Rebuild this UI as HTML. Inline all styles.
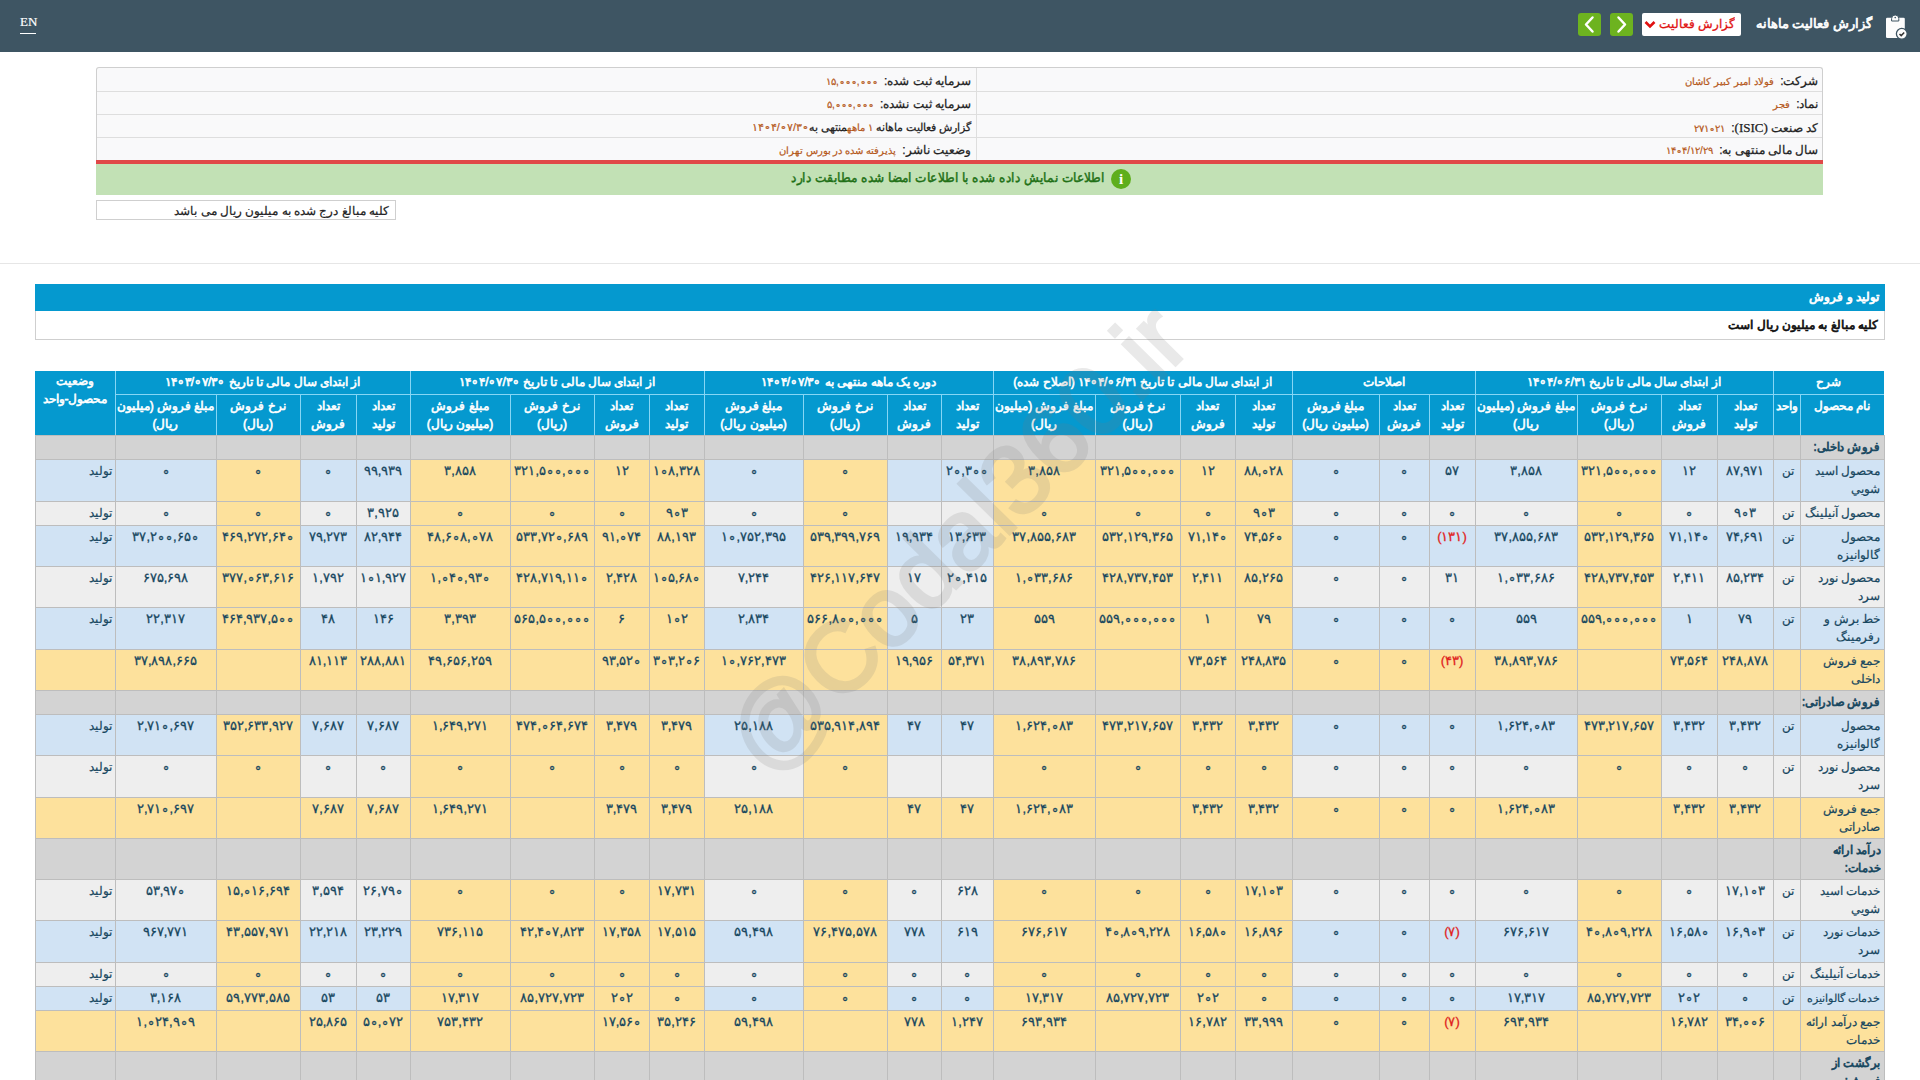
<!DOCTYPE html>
<html dir="rtl" lang="fa"><head><meta charset="utf-8"><title>گزارش فعالیت ماهانه</title>
<style>
html,body{margin:0;padding:0;background:#fff;width:1920px;height:1080px;overflow:hidden;position:relative;font-family:"Liberation Sans",sans-serif;}
body div{position:absolute;box-sizing:border-box;}
#tbl{left:0;top:0;width:1920px;height:1080px;}
.topbar{left:0;top:0;width:1920px;height:52px;background:#3e5563;}
.c,.un,.st,.nm{color:#17475f;line-height:18px;white-space:nowrap;overflow:hidden;padding-top:3px;}
.c{text-align:center;font-size:13px;-webkit-text-stroke:0.3px #17475f;}
.red{color:#e0221c;-webkit-text-stroke:0.3px #e0221c;}
.un{text-align:center;font-size:12px;-webkit-text-stroke:0.2px #17475f;padding-left:2px;}
.st{text-align:right;padding-right:3px;font-size:12px;-webkit-text-stroke:0.2px #17475f;}
.nm{text-align:right;padding-right:4px;font-size:12px;-webkit-text-stroke:0.2px #17475f;}
.nm.sec{font-size:12px;-webkit-text-stroke:0.7px #17475f;}
.sx{display:inline-block;transform:scaleX(0.95);transform-origin:100% 0;}
.vl{width:1px;background:#bdbdbd;}
.hl{height:1px;background:#bdbdbd;}
.hbg{background:#0599cf;}
.h1,.h2{color:#fff;font-size:12px;line-height:18px;text-align:center;white-space:nowrap;overflow:hidden;-webkit-text-stroke:0.6px #fff;}
.h1{padding-top:2px;}
.h2{padding-top:3px;}
.hvl{background:#86d6f5;}
.wm{left:557px;top:487px;width:800px;height:104px;font-size:99px;line-height:104px;font-weight:normal;color:#7a7a7a;-webkit-text-stroke:3px #7a7a7a;opacity:0.16;text-align:center;transform:rotate(-45.5deg);direction:ltr;white-space:nowrap;}
.en{left:20px;top:13px;font-family:"Liberation Serif",serif;font-size:13px;color:#fff;line-height:18px;direction:ltr;-webkit-text-stroke:0.2px #fff;}
.enu{left:20px;top:33px;width:16px;height:1px;background:#fff;}
.ttl{right:48px;top:14px;color:#fff;font-size:13px;line-height:20px;white-space:nowrap;-webkit-text-stroke:0.7px #fff;}
.dd{left:1642px;top:13px;width:99px;height:23px;background:#fff;border-radius:2px;}
.ddt{position:absolute;display:block;right:6px;top:2px;width:76px;overflow:hidden;text-align:right;color:#e01010;font-size:12px;line-height:18px;white-space:nowrap;-webkit-text-stroke:0.3px #e01010;}
.gb{top:13px;width:23px;height:23px;background:#6db31f;border-radius:3px;}
.gb svg{position:absolute;left:0;top:0;}
.info{left:96px;top:67px;width:1727px;height:94px;background:#f9f9fa;border:1px solid #cfcfcf;border-bottom:none;border-radius:3px 3px 0 0;}
.ir{left:0;width:1725px;height:1px;background:#dedede;}
.ivl{left:879px;top:0;width:1px;height:93px;background:#dedede;}
.it{white-space:nowrap;font-size:12px;line-height:23px;color:#222;margin-top:1.5px;-webkit-text-stroke:0.25px #222;}
.vv{color:#b5581a;font-size:10px;padding-right:3px;-webkit-text-stroke:0.2px #b5581a;}
.redl{left:96px;top:160px;width:1727px;height:4px;background:#e04848;}
.grn{left:96px;top:164px;width:1727px;height:31px;background:#c2e1b5;text-align:center;}
.gt{position:absolute;right:718px;top:4px;font-size:13px;line-height:20px;color:#217016;white-space:nowrap;-webkit-text-stroke:0.45px #217016;transform:scaleX(0.931);transform-origin:100% 50%;}
.gi{position:absolute;left:1015px;top:5px;width:20px;height:20px;border-radius:50%;background:#5eae1c;color:#fff;font-size:15px;line-height:20px;text-align:center;font-weight:bold;font-family:"Liberation Serif",serif;}
.note{left:96px;top:200px;width:300px;height:20px;border:1px solid #cfcfcf;font-size:12px;line-height:20px;padding-right:6px;text-align:right;color:#222;white-space:nowrap;-webkit-text-stroke:0.2px #222;}
.sep{left:0;top:263px;width:1920px;height:1px;background:#e6e6e6;}
.bbar{left:35px;top:284px;width:1850px;height:27px;background:#0599cf;color:#fff;font-size:12px;line-height:27px;padding-right:6px;text-align:right;white-space:nowrap;-webkit-text-stroke:0.75px #fff;}
.wbox{left:35px;top:311px;width:1850px;height:29px;border:1px solid #cfcfcf;border-top:none;color:#111;font-size:12px;line-height:28px;padding-right:6px;text-align:right;white-space:nowrap;-webkit-text-stroke:0.7px #111;}
.st2{padding-top:1px !important;}

</style></head><body>
<div class="topbar"></div>
<div class="en">EN</div>
<div class="enu"></div>
<svg style="position:absolute;left:1884px;top:14px" width="26" height="28" viewBox="0 0 26 28">
 <rect x="2" y="3.7" width="18.8" height="20.3" rx="1.3" fill="#fdfdfd"/>
 <path d="M7.6 7 v-2.4 a3.6 3.6 0 0 1 7.2 0 v2.4 z" fill="#fdfdfd" stroke="#3e5563" stroke-width="1"/>
 <circle cx="11.2" cy="3.6" r="0.8" fill="#3e5563"/>
 <circle cx="17.8" cy="19.8" r="5.4" fill="#fdfdfd" stroke="#3e5563" stroke-width="1.3"/>
 <path d="M15.5 20 l1.7 1.6 l3 -3.1" stroke="#333" stroke-width="1.5" fill="none"/>
</svg>
<div class="ttl">گزارش فعالیت ماهانه</div>
<div class="dd"><span class="ddt">گزارش فعالیت ماهانه</span><svg style="position:absolute;left:2px;top:7px" width="12" height="9" viewBox="0 0 12 9"><path d="M1.5 2 L6 6.5 L10.5 2" stroke="#e01010" stroke-width="2.6" fill="none"/></svg></div>
<div class="gb" style="left:1610px"><svg width="23" height="23" viewBox="0 0 23 23"><path d="M8.5 4.5 L15 11.5 L8.5 18.5" stroke="#fff" stroke-width="2.5" fill="none" stroke-linecap="round" stroke-linejoin="round"/></svg></div>
<div class="gb" style="left:1578px"><svg width="23" height="23" viewBox="0 0 23 23"><path d="M14.5 4.5 L8 11.5 L14.5 18.5" stroke="#fff" stroke-width="2.5" fill="none" stroke-linecap="round" stroke-linejoin="round"/></svg></div>

<div class="info">
 <div class="ir" style="top:23px"></div><div class="ir" style="top:46px"></div><div class="ir" style="top:69px"></div>
 <div class="ivl"></div>
 <div class="it" style="right:3.5px;top:0"><span class="lb">شرکت:</span> <span class="vv">فولاد امیر کبیر کاشان</span></div>
 <div class="it" style="right:3.5px;top:23px"><span class="lb">نماد:</span> <span class="vv">فجر</span></div>
 <div class="it" style="right:3.5px;top:46px"><span class="lb">کد صنعت <span style="font-family:'Liberation Serif',serif;font-size:13px">(ISIC)</span>:</span> <span class="vv"><span dir="ltr">۲۷۱∘۲۱</span></span></div>
 <div class="it" style="right:3.5px;top:69px"><span class="lb">سال مالی منتهی به:</span> <span class="vv"><span dir="ltr">۱۴∘۴/۱۲/۲۹</span></span></div>
 <div class="it" style="right:851px;top:0"><span class="lb">سرمایه ثبت شده:</span> <span class="vv"><span dir="ltr">۱۵,∘∘∘,∘∘∘</span></span></div>
 <div class="it" style="right:851px;top:23px"><span class="lb">سرمایه ثبت نشده:</span> <span class="vv"><span dir="ltr">۵,∘∘∘,∘∘∘</span></span></div>
 <div class="it" style="right:851px;top:46px;font-size:11px"><span class="lb">گزارش فعالیت ماهانه</span> <span class="vv" style="padding:0">۱ ماهه</span><span class="lb">منتهی به</span><span class="vv" style="padding:0;font-size:11px"><span dir="ltr">۱۴∘۴/∘۷/۳∘</span></span></div>
 <div class="it" style="right:851px;top:69px"><span class="lb">وضعیت ناشر:</span> <span class="vv">پذیرفته شده در بورس تهران</span></div>
</div>
<div class="redl"></div>
<div class="grn"><span class="gi">i</span><span class="gt">اطلاعات نمایش داده شده با اطلاعات امضا شده مطابقت دارد</span></div>
<div class="note">کلیه مبالغ درج شده به میلیون ریال می باشد</div>
<div class="sep"></div>
<div class="bbar">تولید و فروش</div>
<div class="wbox">کلیه مبالغ به میلیون ریال است</div>

<div id="tbl">
<div class="hbg" style="left:35px;top:371px;width:1849px;height:64px"></div>
<div class="h1" style="left:1773px;top:371px;width:111px;height:23px">شرح</div><div class="h1" style="left:1475px;top:371px;width:298px;height:23px">از ابتدای سال مالی تا تاریخ <span dir="ltr">۱۴∘۴/∘۶/۳۱</span></div><div class="h1" style="left:1292px;top:371px;width:183px;height:23px">اصلاحات</div><div class="h1" style="left:993px;top:371px;width:299px;height:23px">از ابتدای سال مالی تا تاریخ <span dir="ltr">۱۴∘۴/∘۶/۳۱</span> (اصلاح شده)</div><div class="h1" style="left:704px;top:371px;width:289px;height:23px">دوره یک ماهه منتهی به <span dir="ltr">۱۴∘۴/∘۷/۳∘</span></div><div class="h1" style="left:410px;top:371px;width:294px;height:23px">از ابتدای سال مالی تا تاریخ <span dir="ltr">۱۴∘۴/∘۷/۳∘</span></div><div class="h1" style="left:115px;top:371px;width:295px;height:23px">از ابتدای سال مالی تا تاریخ <span dir="ltr">۱۴∘۳/∘۷/۳∘</span></div><div class="h2" style="left:1800px;top:394px;width:84px;height:41px">نام محصول</div><div class="h2" style="left:1773px;top:394px;width:27px;height:41px">واحد</div><div class="h2" style="left:1717px;top:394px;width:56px;height:41px">تعداد<br>تولید</div><div class="h2" style="left:1661px;top:394px;width:56px;height:41px">تعداد<br>فروش</div><div class="h2" style="left:1577px;top:394px;width:84px;height:41px">نرخ فروش<br>(ریال)</div><div class="h2" style="left:1475px;top:394px;width:102px;height:41px">مبلغ فروش (میلیون<br>ریال)</div><div class="h2" style="left:1429px;top:394px;width:46px;height:41px">تعداد<br>تولید</div><div class="h2" style="left:1379px;top:394px;width:50px;height:41px">تعداد<br>فروش</div><div class="h2" style="left:1292px;top:394px;width:87px;height:41px">مبلغ فروش<br>(میلیون ریال)</div><div class="h2" style="left:1235px;top:394px;width:57px;height:41px">تعداد<br>تولید</div><div class="h2" style="left:1180px;top:394px;width:55px;height:41px">تعداد<br>فروش</div><div class="h2" style="left:1095px;top:394px;width:85px;height:41px">نرخ فروش<br>(ریال)</div><div class="h2" style="left:993px;top:394px;width:102px;height:41px">مبلغ فروش (میلیون<br>ریال)</div><div class="h2" style="left:941px;top:394px;width:52px;height:41px">تعداد<br>تولید</div><div class="h2" style="left:887px;top:394px;width:54px;height:41px">تعداد<br>فروش</div><div class="h2" style="left:803px;top:394px;width:84px;height:41px">نرخ فروش<br>(ریال)</div><div class="h2" style="left:704px;top:394px;width:99px;height:41px">مبلغ فروش<br>(میلیون ریال)</div><div class="h2" style="left:649px;top:394px;width:55px;height:41px">تعداد<br>تولید</div><div class="h2" style="left:594px;top:394px;width:55px;height:41px">تعداد<br>فروش</div><div class="h2" style="left:510px;top:394px;width:84px;height:41px">نرخ فروش<br>(ریال)</div><div class="h2" style="left:410px;top:394px;width:100px;height:41px">مبلغ فروش<br>(میلیون ریال)</div><div class="h2" style="left:356px;top:394px;width:54px;height:41px">تعداد<br>تولید</div><div class="h2" style="left:300px;top:394px;width:56px;height:41px">تعداد<br>فروش</div><div class="h2" style="left:216px;top:394px;width:84px;height:41px">نرخ فروش<br>(ریال)</div><div class="h2" style="left:115px;top:394px;width:101px;height:41px">مبلغ فروش (میلیون<br>ریال)</div><div class="h2 st2" style="left:35px;top:371px;width:80px;height:64px">وضعیت<br>محصول-واحد</div>
<div class="hvl" style="left:115px;top:394px;width:1769px;height:1px"></div><div class="hvl" style="left:1773px;top:371px;width:1px;height:64px"></div><div class="hvl" style="left:1475px;top:371px;width:1px;height:64px"></div><div class="hvl" style="left:1292px;top:371px;width:1px;height:64px"></div><div class="hvl" style="left:993px;top:371px;width:1px;height:64px"></div><div class="hvl" style="left:704px;top:371px;width:1px;height:64px"></div><div class="hvl" style="left:410px;top:371px;width:1px;height:64px"></div><div class="hvl" style="left:115px;top:371px;width:1px;height:64px"></div><div class="hvl" style="left:115px;top:394px;width:1px;height:41px"></div><div class="hvl" style="left:216px;top:394px;width:1px;height:41px"></div><div class="hvl" style="left:300px;top:394px;width:1px;height:41px"></div><div class="hvl" style="left:356px;top:394px;width:1px;height:41px"></div><div class="hvl" style="left:410px;top:394px;width:1px;height:41px"></div><div class="hvl" style="left:510px;top:394px;width:1px;height:41px"></div><div class="hvl" style="left:594px;top:394px;width:1px;height:41px"></div><div class="hvl" style="left:649px;top:394px;width:1px;height:41px"></div><div class="hvl" style="left:704px;top:394px;width:1px;height:41px"></div><div class="hvl" style="left:803px;top:394px;width:1px;height:41px"></div><div class="hvl" style="left:887px;top:394px;width:1px;height:41px"></div><div class="hvl" style="left:941px;top:394px;width:1px;height:41px"></div><div class="hvl" style="left:993px;top:394px;width:1px;height:41px"></div><div class="hvl" style="left:1095px;top:394px;width:1px;height:41px"></div><div class="hvl" style="left:1180px;top:394px;width:1px;height:41px"></div><div class="hvl" style="left:1235px;top:394px;width:1px;height:41px"></div><div class="hvl" style="left:1292px;top:394px;width:1px;height:41px"></div><div class="hvl" style="left:1379px;top:394px;width:1px;height:41px"></div><div class="hvl" style="left:1429px;top:394px;width:1px;height:41px"></div><div class="hvl" style="left:1475px;top:394px;width:1px;height:41px"></div><div class="hvl" style="left:1577px;top:394px;width:1px;height:41px"></div><div class="hvl" style="left:1661px;top:394px;width:1px;height:41px"></div><div class="hvl" style="left:1717px;top:394px;width:1px;height:41px"></div><div class="hvl" style="left:1773px;top:394px;width:1px;height:41px"></div><div class="hvl" style="left:1800px;top:394px;width:1px;height:41px"></div>
<div class="nm sec" style="left:1800px;top:435px;width:84px;height:24px;background:#d3d3d3"><span class="sx">فروش داخلی:</span></div><div class="c" dir="ltr" style="left:1773px;top:435px;width:27px;height:24px;background:#d3d3d3"></div><div class="c" dir="ltr" style="left:1717px;top:435px;width:56px;height:24px;background:#d3d3d3"></div><div class="c" dir="ltr" style="left:1661px;top:435px;width:56px;height:24px;background:#d3d3d3"></div><div class="c" dir="ltr" style="left:1577px;top:435px;width:84px;height:24px;background:#d3d3d3"></div><div class="c" dir="ltr" style="left:1475px;top:435px;width:102px;height:24px;background:#d3d3d3"></div><div class="c" dir="ltr" style="left:1429px;top:435px;width:46px;height:24px;background:#d3d3d3"></div><div class="c" dir="ltr" style="left:1379px;top:435px;width:50px;height:24px;background:#d3d3d3"></div><div class="c" dir="ltr" style="left:1292px;top:435px;width:87px;height:24px;background:#d3d3d3"></div><div class="c" dir="ltr" style="left:1235px;top:435px;width:57px;height:24px;background:#d3d3d3"></div><div class="c" dir="ltr" style="left:1180px;top:435px;width:55px;height:24px;background:#d3d3d3"></div><div class="c" dir="ltr" style="left:1095px;top:435px;width:85px;height:24px;background:#d3d3d3"></div><div class="c" dir="ltr" style="left:993px;top:435px;width:102px;height:24px;background:#d3d3d3"></div><div class="c" dir="ltr" style="left:941px;top:435px;width:52px;height:24px;background:#d3d3d3"></div><div class="c" dir="ltr" style="left:887px;top:435px;width:54px;height:24px;background:#d3d3d3"></div><div class="c" dir="ltr" style="left:803px;top:435px;width:84px;height:24px;background:#d3d3d3"></div><div class="c" dir="ltr" style="left:704px;top:435px;width:99px;height:24px;background:#d3d3d3"></div><div class="c" dir="ltr" style="left:649px;top:435px;width:55px;height:24px;background:#d3d3d3"></div><div class="c" dir="ltr" style="left:594px;top:435px;width:55px;height:24px;background:#d3d3d3"></div><div class="c" dir="ltr" style="left:510px;top:435px;width:84px;height:24px;background:#d3d3d3"></div><div class="c" dir="ltr" style="left:410px;top:435px;width:100px;height:24px;background:#d3d3d3"></div><div class="c" dir="ltr" style="left:356px;top:435px;width:54px;height:24px;background:#d3d3d3"></div><div class="c" dir="ltr" style="left:300px;top:435px;width:56px;height:24px;background:#d3d3d3"></div><div class="c" dir="ltr" style="left:216px;top:435px;width:84px;height:24px;background:#d3d3d3"></div><div class="c" dir="ltr" style="left:115px;top:435px;width:101px;height:24px;background:#d3d3d3"></div><div class="c" dir="ltr" style="left:35px;top:435px;width:80px;height:24px;background:#d3d3d3"></div><div class="nm" style="left:1800px;top:459px;width:84px;height:42px;background:#d1e3f4">محصول اسید<br>شويي</div><div class="un" style="left:1773px;top:459px;width:27px;height:42px;background:#d1e3f4">تن</div><div class="c" dir="ltr" style="left:1717px;top:459px;width:56px;height:42px;background:#d1e3f4">۸۷,۹۷۱</div><div class="c" dir="ltr" style="left:1661px;top:459px;width:56px;height:42px;background:#d1e3f4">۱۲</div><div class="c" dir="ltr" style="left:1577px;top:459px;width:84px;height:42px;background:#fde19c">۳۲۱,۵∘∘,∘∘∘</div><div class="c" dir="ltr" style="left:1475px;top:459px;width:102px;height:42px;background:#d1e3f4">۳,۸۵۸</div><div class="c" dir="ltr" style="left:1429px;top:459px;width:46px;height:42px;background:#d1e3f4">۵۷</div><div class="c" dir="ltr" style="left:1379px;top:459px;width:50px;height:42px;background:#d1e3f4">∘</div><div class="c" dir="ltr" style="left:1292px;top:459px;width:87px;height:42px;background:#d1e3f4">∘</div><div class="c" dir="ltr" style="left:1235px;top:459px;width:57px;height:42px;background:#fde19c">۸۸,∘۲۸</div><div class="c" dir="ltr" style="left:1180px;top:459px;width:55px;height:42px;background:#fde19c">۱۲</div><div class="c" dir="ltr" style="left:1095px;top:459px;width:85px;height:42px;background:#fde19c">۳۲۱,۵∘∘,∘∘∘</div><div class="c" dir="ltr" style="left:993px;top:459px;width:102px;height:42px;background:#fde19c">۳,۸۵۸</div><div class="c" dir="ltr" style="left:941px;top:459px;width:52px;height:42px;background:#d1e3f4">۲∘,۳∘∘</div><div class="c" dir="ltr" style="left:887px;top:459px;width:54px;height:42px;background:#d1e3f4"></div><div class="c" dir="ltr" style="left:803px;top:459px;width:84px;height:42px;background:#fde19c">∘</div><div class="c" dir="ltr" style="left:704px;top:459px;width:99px;height:42px;background:#d1e3f4">∘</div><div class="c" dir="ltr" style="left:649px;top:459px;width:55px;height:42px;background:#fde19c">۱∘۸,۳۲۸</div><div class="c" dir="ltr" style="left:594px;top:459px;width:55px;height:42px;background:#fde19c">۱۲</div><div class="c" dir="ltr" style="left:510px;top:459px;width:84px;height:42px;background:#fde19c">۳۲۱,۵∘∘,∘∘∘</div><div class="c" dir="ltr" style="left:410px;top:459px;width:100px;height:42px;background:#fde19c">۳,۸۵۸</div><div class="c" dir="ltr" style="left:356px;top:459px;width:54px;height:42px;background:#d1e3f4">۹۹,۹۳۹</div><div class="c" dir="ltr" style="left:300px;top:459px;width:56px;height:42px;background:#d1e3f4">∘</div><div class="c" dir="ltr" style="left:216px;top:459px;width:84px;height:42px;background:#fde19c">∘</div><div class="c" dir="ltr" style="left:115px;top:459px;width:101px;height:42px;background:#d1e3f4">∘</div><div class="st" style="left:35px;top:459px;width:80px;height:42px;background:#d1e3f4">تولید</div><div class="nm" style="left:1800px;top:501px;width:84px;height:24px;background:#eeeeee">محصول آنیلینگ</div><div class="un" style="left:1773px;top:501px;width:27px;height:24px;background:#eeeeee">تن</div><div class="c" dir="ltr" style="left:1717px;top:501px;width:56px;height:24px;background:#eeeeee">۹∘۳</div><div class="c" dir="ltr" style="left:1661px;top:501px;width:56px;height:24px;background:#eeeeee">∘</div><div class="c" dir="ltr" style="left:1577px;top:501px;width:84px;height:24px;background:#fde19c">∘</div><div class="c" dir="ltr" style="left:1475px;top:501px;width:102px;height:24px;background:#eeeeee">∘</div><div class="c" dir="ltr" style="left:1429px;top:501px;width:46px;height:24px;background:#eeeeee">∘</div><div class="c" dir="ltr" style="left:1379px;top:501px;width:50px;height:24px;background:#eeeeee">∘</div><div class="c" dir="ltr" style="left:1292px;top:501px;width:87px;height:24px;background:#eeeeee">∘</div><div class="c" dir="ltr" style="left:1235px;top:501px;width:57px;height:24px;background:#fde19c">۹∘۳</div><div class="c" dir="ltr" style="left:1180px;top:501px;width:55px;height:24px;background:#fde19c">∘</div><div class="c" dir="ltr" style="left:1095px;top:501px;width:85px;height:24px;background:#fde19c">∘</div><div class="c" dir="ltr" style="left:993px;top:501px;width:102px;height:24px;background:#fde19c">∘</div><div class="c" dir="ltr" style="left:941px;top:501px;width:52px;height:24px;background:#eeeeee"></div><div class="c" dir="ltr" style="left:887px;top:501px;width:54px;height:24px;background:#eeeeee"></div><div class="c" dir="ltr" style="left:803px;top:501px;width:84px;height:24px;background:#fde19c">∘</div><div class="c" dir="ltr" style="left:704px;top:501px;width:99px;height:24px;background:#eeeeee">∘</div><div class="c" dir="ltr" style="left:649px;top:501px;width:55px;height:24px;background:#fde19c">۹∘۳</div><div class="c" dir="ltr" style="left:594px;top:501px;width:55px;height:24px;background:#fde19c">∘</div><div class="c" dir="ltr" style="left:510px;top:501px;width:84px;height:24px;background:#fde19c">∘</div><div class="c" dir="ltr" style="left:410px;top:501px;width:100px;height:24px;background:#fde19c">∘</div><div class="c" dir="ltr" style="left:356px;top:501px;width:54px;height:24px;background:#eeeeee">۳,۹۲۵</div><div class="c" dir="ltr" style="left:300px;top:501px;width:56px;height:24px;background:#eeeeee">∘</div><div class="c" dir="ltr" style="left:216px;top:501px;width:84px;height:24px;background:#fde19c">∘</div><div class="c" dir="ltr" style="left:115px;top:501px;width:101px;height:24px;background:#eeeeee">∘</div><div class="st" style="left:35px;top:501px;width:80px;height:24px;background:#eeeeee">تولید</div><div class="nm" style="left:1800px;top:525px;width:84px;height:41px;background:#d1e3f4">محصول<br>گالوانیزه</div><div class="un" style="left:1773px;top:525px;width:27px;height:41px;background:#d1e3f4">تن</div><div class="c" dir="ltr" style="left:1717px;top:525px;width:56px;height:41px;background:#d1e3f4">۷۴,۶۹۱</div><div class="c" dir="ltr" style="left:1661px;top:525px;width:56px;height:41px;background:#d1e3f4">۷۱,۱۴∘</div><div class="c" dir="ltr" style="left:1577px;top:525px;width:84px;height:41px;background:#fde19c">۵۳۲,۱۲۹,۳۶۵</div><div class="c" dir="ltr" style="left:1475px;top:525px;width:102px;height:41px;background:#d1e3f4">۳۷,۸۵۵,۶۸۳</div><div class="c red" dir="ltr" style="left:1429px;top:525px;width:46px;height:41px;background:#d1e3f4">(۱۳۱)</div><div class="c" dir="ltr" style="left:1379px;top:525px;width:50px;height:41px;background:#d1e3f4">∘</div><div class="c" dir="ltr" style="left:1292px;top:525px;width:87px;height:41px;background:#d1e3f4">∘</div><div class="c" dir="ltr" style="left:1235px;top:525px;width:57px;height:41px;background:#fde19c">۷۴,۵۶∘</div><div class="c" dir="ltr" style="left:1180px;top:525px;width:55px;height:41px;background:#fde19c">۷۱,۱۴∘</div><div class="c" dir="ltr" style="left:1095px;top:525px;width:85px;height:41px;background:#fde19c">۵۳۲,۱۲۹,۳۶۵</div><div class="c" dir="ltr" style="left:993px;top:525px;width:102px;height:41px;background:#fde19c">۳۷,۸۵۵,۶۸۳</div><div class="c" dir="ltr" style="left:941px;top:525px;width:52px;height:41px;background:#d1e3f4">۱۳,۶۳۳</div><div class="c" dir="ltr" style="left:887px;top:525px;width:54px;height:41px;background:#d1e3f4">۱۹,۹۳۴</div><div class="c" dir="ltr" style="left:803px;top:525px;width:84px;height:41px;background:#fde19c">۵۳۹,۳۹۹,۷۶۹</div><div class="c" dir="ltr" style="left:704px;top:525px;width:99px;height:41px;background:#d1e3f4">۱∘,۷۵۲,۳۹۵</div><div class="c" dir="ltr" style="left:649px;top:525px;width:55px;height:41px;background:#fde19c">۸۸,۱۹۳</div><div class="c" dir="ltr" style="left:594px;top:525px;width:55px;height:41px;background:#fde19c">۹۱,∘۷۴</div><div class="c" dir="ltr" style="left:510px;top:525px;width:84px;height:41px;background:#fde19c">۵۳۳,۷۲∘,۶۸۹</div><div class="c" dir="ltr" style="left:410px;top:525px;width:100px;height:41px;background:#fde19c">۴۸,۶∘۸,∘۷۸</div><div class="c" dir="ltr" style="left:356px;top:525px;width:54px;height:41px;background:#d1e3f4">۸۲,۹۴۴</div><div class="c" dir="ltr" style="left:300px;top:525px;width:56px;height:41px;background:#d1e3f4">۷۹,۲۷۳</div><div class="c" dir="ltr" style="left:216px;top:525px;width:84px;height:41px;background:#fde19c">۴۶۹,۲۷۲,۶۴∘</div><div class="c" dir="ltr" style="left:115px;top:525px;width:101px;height:41px;background:#d1e3f4">۳۷,۲∘∘,۶۵∘</div><div class="st" style="left:35px;top:525px;width:80px;height:41px;background:#d1e3f4">تولید</div><div class="nm" style="left:1800px;top:566px;width:84px;height:41px;background:#eeeeee">محصول نورد<br>سرد</div><div class="un" style="left:1773px;top:566px;width:27px;height:41px;background:#eeeeee">تن</div><div class="c" dir="ltr" style="left:1717px;top:566px;width:56px;height:41px;background:#eeeeee">۸۵,۲۳۴</div><div class="c" dir="ltr" style="left:1661px;top:566px;width:56px;height:41px;background:#eeeeee">۲,۴۱۱</div><div class="c" dir="ltr" style="left:1577px;top:566px;width:84px;height:41px;background:#fde19c">۴۲۸,۷۳۷,۴۵۳</div><div class="c" dir="ltr" style="left:1475px;top:566px;width:102px;height:41px;background:#eeeeee">۱,∘۳۳,۶۸۶</div><div class="c" dir="ltr" style="left:1429px;top:566px;width:46px;height:41px;background:#eeeeee">۳۱</div><div class="c" dir="ltr" style="left:1379px;top:566px;width:50px;height:41px;background:#eeeeee">∘</div><div class="c" dir="ltr" style="left:1292px;top:566px;width:87px;height:41px;background:#eeeeee">∘</div><div class="c" dir="ltr" style="left:1235px;top:566px;width:57px;height:41px;background:#fde19c">۸۵,۲۶۵</div><div class="c" dir="ltr" style="left:1180px;top:566px;width:55px;height:41px;background:#fde19c">۲,۴۱۱</div><div class="c" dir="ltr" style="left:1095px;top:566px;width:85px;height:41px;background:#fde19c">۴۲۸,۷۳۷,۴۵۳</div><div class="c" dir="ltr" style="left:993px;top:566px;width:102px;height:41px;background:#fde19c">۱,∘۳۳,۶۸۶</div><div class="c" dir="ltr" style="left:941px;top:566px;width:52px;height:41px;background:#eeeeee">۲∘,۴۱۵</div><div class="c" dir="ltr" style="left:887px;top:566px;width:54px;height:41px;background:#eeeeee">۱۷</div><div class="c" dir="ltr" style="left:803px;top:566px;width:84px;height:41px;background:#fde19c">۴۲۶,۱۱۷,۶۴۷</div><div class="c" dir="ltr" style="left:704px;top:566px;width:99px;height:41px;background:#eeeeee">۷,۲۴۴</div><div class="c" dir="ltr" style="left:649px;top:566px;width:55px;height:41px;background:#fde19c">۱∘۵,۶۸∘</div><div class="c" dir="ltr" style="left:594px;top:566px;width:55px;height:41px;background:#fde19c">۲,۴۲۸</div><div class="c" dir="ltr" style="left:510px;top:566px;width:84px;height:41px;background:#fde19c">۴۲۸,۷۱۹,۱۱∘</div><div class="c" dir="ltr" style="left:410px;top:566px;width:100px;height:41px;background:#fde19c">۱,∘۴∘,۹۳∘</div><div class="c" dir="ltr" style="left:356px;top:566px;width:54px;height:41px;background:#eeeeee">۱∘۱,۹۲۷</div><div class="c" dir="ltr" style="left:300px;top:566px;width:56px;height:41px;background:#eeeeee">۱,۷۹۲</div><div class="c" dir="ltr" style="left:216px;top:566px;width:84px;height:41px;background:#fde19c">۳۷۷,∘۶۳,۶۱۶</div><div class="c" dir="ltr" style="left:115px;top:566px;width:101px;height:41px;background:#eeeeee">۶۷۵,۶۹۸</div><div class="st" style="left:35px;top:566px;width:80px;height:41px;background:#eeeeee">تولید</div><div class="nm" style="left:1800px;top:607px;width:84px;height:42px;background:#d1e3f4">خط برش و<br>رفرمینگ</div><div class="un" style="left:1773px;top:607px;width:27px;height:42px;background:#d1e3f4">تن</div><div class="c" dir="ltr" style="left:1717px;top:607px;width:56px;height:42px;background:#d1e3f4">۷۹</div><div class="c" dir="ltr" style="left:1661px;top:607px;width:56px;height:42px;background:#d1e3f4">۱</div><div class="c" dir="ltr" style="left:1577px;top:607px;width:84px;height:42px;background:#fde19c">۵۵۹,∘∘∘,∘∘∘</div><div class="c" dir="ltr" style="left:1475px;top:607px;width:102px;height:42px;background:#d1e3f4">۵۵۹</div><div class="c" dir="ltr" style="left:1429px;top:607px;width:46px;height:42px;background:#d1e3f4">∘</div><div class="c" dir="ltr" style="left:1379px;top:607px;width:50px;height:42px;background:#d1e3f4">∘</div><div class="c" dir="ltr" style="left:1292px;top:607px;width:87px;height:42px;background:#d1e3f4">∘</div><div class="c" dir="ltr" style="left:1235px;top:607px;width:57px;height:42px;background:#fde19c">۷۹</div><div class="c" dir="ltr" style="left:1180px;top:607px;width:55px;height:42px;background:#fde19c">۱</div><div class="c" dir="ltr" style="left:1095px;top:607px;width:85px;height:42px;background:#fde19c">۵۵۹,∘∘∘,∘∘∘</div><div class="c" dir="ltr" style="left:993px;top:607px;width:102px;height:42px;background:#fde19c">۵۵۹</div><div class="c" dir="ltr" style="left:941px;top:607px;width:52px;height:42px;background:#d1e3f4">۲۳</div><div class="c" dir="ltr" style="left:887px;top:607px;width:54px;height:42px;background:#d1e3f4">۵</div><div class="c" dir="ltr" style="left:803px;top:607px;width:84px;height:42px;background:#fde19c">۵۶۶,۸∘∘,∘∘∘</div><div class="c" dir="ltr" style="left:704px;top:607px;width:99px;height:42px;background:#d1e3f4">۲,۸۳۴</div><div class="c" dir="ltr" style="left:649px;top:607px;width:55px;height:42px;background:#fde19c">۱∘۲</div><div class="c" dir="ltr" style="left:594px;top:607px;width:55px;height:42px;background:#fde19c">۶</div><div class="c" dir="ltr" style="left:510px;top:607px;width:84px;height:42px;background:#fde19c">۵۶۵,۵∘∘,∘∘∘</div><div class="c" dir="ltr" style="left:410px;top:607px;width:100px;height:42px;background:#fde19c">۳,۳۹۳</div><div class="c" dir="ltr" style="left:356px;top:607px;width:54px;height:42px;background:#d1e3f4">۱۴۶</div><div class="c" dir="ltr" style="left:300px;top:607px;width:56px;height:42px;background:#d1e3f4">۴۸</div><div class="c" dir="ltr" style="left:216px;top:607px;width:84px;height:42px;background:#fde19c">۴۶۴,۹۳۷,۵∘∘</div><div class="c" dir="ltr" style="left:115px;top:607px;width:101px;height:42px;background:#d1e3f4">۲۲,۳۱۷</div><div class="st" style="left:35px;top:607px;width:80px;height:42px;background:#d1e3f4">تولید</div><div class="nm" style="left:1800px;top:649px;width:84px;height:41px;background:#fde19c">جمع فروش<br>داخلی</div><div class="un" style="left:1773px;top:649px;width:27px;height:41px;background:#fde19c"></div><div class="c" dir="ltr" style="left:1717px;top:649px;width:56px;height:41px;background:#fde19c">۲۴۸,۸۷۸</div><div class="c" dir="ltr" style="left:1661px;top:649px;width:56px;height:41px;background:#fde19c">۷۳,۵۶۴</div><div class="c" dir="ltr" style="left:1577px;top:649px;width:84px;height:41px;background:#fde19c"></div><div class="c" dir="ltr" style="left:1475px;top:649px;width:102px;height:41px;background:#fde19c">۳۸,۸۹۳,۷۸۶</div><div class="c red" dir="ltr" style="left:1429px;top:649px;width:46px;height:41px;background:#fde19c">(۴۳)</div><div class="c" dir="ltr" style="left:1379px;top:649px;width:50px;height:41px;background:#fde19c">∘</div><div class="c" dir="ltr" style="left:1292px;top:649px;width:87px;height:41px;background:#fde19c">∘</div><div class="c" dir="ltr" style="left:1235px;top:649px;width:57px;height:41px;background:#fde19c">۲۴۸,۸۳۵</div><div class="c" dir="ltr" style="left:1180px;top:649px;width:55px;height:41px;background:#fde19c">۷۳,۵۶۴</div><div class="c" dir="ltr" style="left:1095px;top:649px;width:85px;height:41px;background:#fde19c"></div><div class="c" dir="ltr" style="left:993px;top:649px;width:102px;height:41px;background:#fde19c">۳۸,۸۹۳,۷۸۶</div><div class="c" dir="ltr" style="left:941px;top:649px;width:52px;height:41px;background:#fde19c">۵۴,۳۷۱</div><div class="c" dir="ltr" style="left:887px;top:649px;width:54px;height:41px;background:#fde19c">۱۹,۹۵۶</div><div class="c" dir="ltr" style="left:803px;top:649px;width:84px;height:41px;background:#fde19c"></div><div class="c" dir="ltr" style="left:704px;top:649px;width:99px;height:41px;background:#fde19c">۱∘,۷۶۲,۴۷۳</div><div class="c" dir="ltr" style="left:649px;top:649px;width:55px;height:41px;background:#fde19c">۳∘۳,۲∘۶</div><div class="c" dir="ltr" style="left:594px;top:649px;width:55px;height:41px;background:#fde19c">۹۳,۵۲∘</div><div class="c" dir="ltr" style="left:510px;top:649px;width:84px;height:41px;background:#fde19c"></div><div class="c" dir="ltr" style="left:410px;top:649px;width:100px;height:41px;background:#fde19c">۴۹,۶۵۶,۲۵۹</div><div class="c" dir="ltr" style="left:356px;top:649px;width:54px;height:41px;background:#fde19c">۲۸۸,۸۸۱</div><div class="c" dir="ltr" style="left:300px;top:649px;width:56px;height:41px;background:#fde19c">۸۱,۱۱۳</div><div class="c" dir="ltr" style="left:216px;top:649px;width:84px;height:41px;background:#fde19c"></div><div class="c" dir="ltr" style="left:115px;top:649px;width:101px;height:41px;background:#fde19c">۳۷,۸۹۸,۶۶۵</div><div class="st" style="left:35px;top:649px;width:80px;height:41px;background:#fde19c"></div><div class="nm sec" style="left:1800px;top:690px;width:84px;height:24px;background:#d3d3d3"><span class="sx">فروش صادراتی:</span></div><div class="c" dir="ltr" style="left:1773px;top:690px;width:27px;height:24px;background:#d3d3d3"></div><div class="c" dir="ltr" style="left:1717px;top:690px;width:56px;height:24px;background:#d3d3d3"></div><div class="c" dir="ltr" style="left:1661px;top:690px;width:56px;height:24px;background:#d3d3d3"></div><div class="c" dir="ltr" style="left:1577px;top:690px;width:84px;height:24px;background:#d3d3d3"></div><div class="c" dir="ltr" style="left:1475px;top:690px;width:102px;height:24px;background:#d3d3d3"></div><div class="c" dir="ltr" style="left:1429px;top:690px;width:46px;height:24px;background:#d3d3d3"></div><div class="c" dir="ltr" style="left:1379px;top:690px;width:50px;height:24px;background:#d3d3d3"></div><div class="c" dir="ltr" style="left:1292px;top:690px;width:87px;height:24px;background:#d3d3d3"></div><div class="c" dir="ltr" style="left:1235px;top:690px;width:57px;height:24px;background:#d3d3d3"></div><div class="c" dir="ltr" style="left:1180px;top:690px;width:55px;height:24px;background:#d3d3d3"></div><div class="c" dir="ltr" style="left:1095px;top:690px;width:85px;height:24px;background:#d3d3d3"></div><div class="c" dir="ltr" style="left:993px;top:690px;width:102px;height:24px;background:#d3d3d3"></div><div class="c" dir="ltr" style="left:941px;top:690px;width:52px;height:24px;background:#d3d3d3"></div><div class="c" dir="ltr" style="left:887px;top:690px;width:54px;height:24px;background:#d3d3d3"></div><div class="c" dir="ltr" style="left:803px;top:690px;width:84px;height:24px;background:#d3d3d3"></div><div class="c" dir="ltr" style="left:704px;top:690px;width:99px;height:24px;background:#d3d3d3"></div><div class="c" dir="ltr" style="left:649px;top:690px;width:55px;height:24px;background:#d3d3d3"></div><div class="c" dir="ltr" style="left:594px;top:690px;width:55px;height:24px;background:#d3d3d3"></div><div class="c" dir="ltr" style="left:510px;top:690px;width:84px;height:24px;background:#d3d3d3"></div><div class="c" dir="ltr" style="left:410px;top:690px;width:100px;height:24px;background:#d3d3d3"></div><div class="c" dir="ltr" style="left:356px;top:690px;width:54px;height:24px;background:#d3d3d3"></div><div class="c" dir="ltr" style="left:300px;top:690px;width:56px;height:24px;background:#d3d3d3"></div><div class="c" dir="ltr" style="left:216px;top:690px;width:84px;height:24px;background:#d3d3d3"></div><div class="c" dir="ltr" style="left:115px;top:690px;width:101px;height:24px;background:#d3d3d3"></div><div class="c" dir="ltr" style="left:35px;top:690px;width:80px;height:24px;background:#d3d3d3"></div><div class="nm" style="left:1800px;top:714px;width:84px;height:41px;background:#d1e3f4">محصول<br>گالوانیزه</div><div class="un" style="left:1773px;top:714px;width:27px;height:41px;background:#d1e3f4">تن</div><div class="c" dir="ltr" style="left:1717px;top:714px;width:56px;height:41px;background:#d1e3f4">۳,۴۳۲</div><div class="c" dir="ltr" style="left:1661px;top:714px;width:56px;height:41px;background:#d1e3f4">۳,۴۳۲</div><div class="c" dir="ltr" style="left:1577px;top:714px;width:84px;height:41px;background:#fde19c">۴۷۳,۲۱۷,۶۵۷</div><div class="c" dir="ltr" style="left:1475px;top:714px;width:102px;height:41px;background:#d1e3f4">۱,۶۲۴,∘۸۳</div><div class="c" dir="ltr" style="left:1429px;top:714px;width:46px;height:41px;background:#d1e3f4">∘</div><div class="c" dir="ltr" style="left:1379px;top:714px;width:50px;height:41px;background:#d1e3f4">∘</div><div class="c" dir="ltr" style="left:1292px;top:714px;width:87px;height:41px;background:#d1e3f4">∘</div><div class="c" dir="ltr" style="left:1235px;top:714px;width:57px;height:41px;background:#fde19c">۳,۴۳۲</div><div class="c" dir="ltr" style="left:1180px;top:714px;width:55px;height:41px;background:#fde19c">۳,۴۳۲</div><div class="c" dir="ltr" style="left:1095px;top:714px;width:85px;height:41px;background:#fde19c">۴۷۳,۲۱۷,۶۵۷</div><div class="c" dir="ltr" style="left:993px;top:714px;width:102px;height:41px;background:#fde19c">۱,۶۲۴,∘۸۳</div><div class="c" dir="ltr" style="left:941px;top:714px;width:52px;height:41px;background:#d1e3f4">۴۷</div><div class="c" dir="ltr" style="left:887px;top:714px;width:54px;height:41px;background:#d1e3f4">۴۷</div><div class="c" dir="ltr" style="left:803px;top:714px;width:84px;height:41px;background:#fde19c">۵۳۵,۹۱۴,۸۹۴</div><div class="c" dir="ltr" style="left:704px;top:714px;width:99px;height:41px;background:#d1e3f4">۲۵,۱۸۸</div><div class="c" dir="ltr" style="left:649px;top:714px;width:55px;height:41px;background:#fde19c">۳,۴۷۹</div><div class="c" dir="ltr" style="left:594px;top:714px;width:55px;height:41px;background:#fde19c">۳,۴۷۹</div><div class="c" dir="ltr" style="left:510px;top:714px;width:84px;height:41px;background:#fde19c">۴۷۴,∘۶۴,۶۷۴</div><div class="c" dir="ltr" style="left:410px;top:714px;width:100px;height:41px;background:#fde19c">۱,۶۴۹,۲۷۱</div><div class="c" dir="ltr" style="left:356px;top:714px;width:54px;height:41px;background:#d1e3f4">۷,۶۸۷</div><div class="c" dir="ltr" style="left:300px;top:714px;width:56px;height:41px;background:#d1e3f4">۷,۶۸۷</div><div class="c" dir="ltr" style="left:216px;top:714px;width:84px;height:41px;background:#fde19c">۳۵۲,۶۳۳,۹۲۷</div><div class="c" dir="ltr" style="left:115px;top:714px;width:101px;height:41px;background:#d1e3f4">۲,۷۱∘,۶۹۷</div><div class="st" style="left:35px;top:714px;width:80px;height:41px;background:#d1e3f4">تولید</div><div class="nm" style="left:1800px;top:755px;width:84px;height:42px;background:#eeeeee">محصول نورد<br>سرد</div><div class="un" style="left:1773px;top:755px;width:27px;height:42px;background:#eeeeee">تن</div><div class="c" dir="ltr" style="left:1717px;top:755px;width:56px;height:42px;background:#eeeeee">∘</div><div class="c" dir="ltr" style="left:1661px;top:755px;width:56px;height:42px;background:#eeeeee">∘</div><div class="c" dir="ltr" style="left:1577px;top:755px;width:84px;height:42px;background:#fde19c">∘</div><div class="c" dir="ltr" style="left:1475px;top:755px;width:102px;height:42px;background:#eeeeee">∘</div><div class="c" dir="ltr" style="left:1429px;top:755px;width:46px;height:42px;background:#eeeeee">∘</div><div class="c" dir="ltr" style="left:1379px;top:755px;width:50px;height:42px;background:#eeeeee">∘</div><div class="c" dir="ltr" style="left:1292px;top:755px;width:87px;height:42px;background:#eeeeee">∘</div><div class="c" dir="ltr" style="left:1235px;top:755px;width:57px;height:42px;background:#fde19c">∘</div><div class="c" dir="ltr" style="left:1180px;top:755px;width:55px;height:42px;background:#fde19c">∘</div><div class="c" dir="ltr" style="left:1095px;top:755px;width:85px;height:42px;background:#fde19c">∘</div><div class="c" dir="ltr" style="left:993px;top:755px;width:102px;height:42px;background:#fde19c">∘</div><div class="c" dir="ltr" style="left:941px;top:755px;width:52px;height:42px;background:#eeeeee"></div><div class="c" dir="ltr" style="left:887px;top:755px;width:54px;height:42px;background:#eeeeee"></div><div class="c" dir="ltr" style="left:803px;top:755px;width:84px;height:42px;background:#fde19c">∘</div><div class="c" dir="ltr" style="left:704px;top:755px;width:99px;height:42px;background:#eeeeee">∘</div><div class="c" dir="ltr" style="left:649px;top:755px;width:55px;height:42px;background:#fde19c">∘</div><div class="c" dir="ltr" style="left:594px;top:755px;width:55px;height:42px;background:#fde19c">∘</div><div class="c" dir="ltr" style="left:510px;top:755px;width:84px;height:42px;background:#fde19c">∘</div><div class="c" dir="ltr" style="left:410px;top:755px;width:100px;height:42px;background:#fde19c">∘</div><div class="c" dir="ltr" style="left:356px;top:755px;width:54px;height:42px;background:#eeeeee">∘</div><div class="c" dir="ltr" style="left:300px;top:755px;width:56px;height:42px;background:#eeeeee">∘</div><div class="c" dir="ltr" style="left:216px;top:755px;width:84px;height:42px;background:#fde19c">∘</div><div class="c" dir="ltr" style="left:115px;top:755px;width:101px;height:42px;background:#eeeeee">∘</div><div class="st" style="left:35px;top:755px;width:80px;height:42px;background:#eeeeee">تولید</div><div class="nm" style="left:1800px;top:797px;width:84px;height:41px;background:#fde19c">جمع فروش<br>صادراتی</div><div class="un" style="left:1773px;top:797px;width:27px;height:41px;background:#fde19c"></div><div class="c" dir="ltr" style="left:1717px;top:797px;width:56px;height:41px;background:#fde19c">۳,۴۳۲</div><div class="c" dir="ltr" style="left:1661px;top:797px;width:56px;height:41px;background:#fde19c">۳,۴۳۲</div><div class="c" dir="ltr" style="left:1577px;top:797px;width:84px;height:41px;background:#fde19c"></div><div class="c" dir="ltr" style="left:1475px;top:797px;width:102px;height:41px;background:#fde19c">۱,۶۲۴,∘۸۳</div><div class="c" dir="ltr" style="left:1429px;top:797px;width:46px;height:41px;background:#fde19c">∘</div><div class="c" dir="ltr" style="left:1379px;top:797px;width:50px;height:41px;background:#fde19c">∘</div><div class="c" dir="ltr" style="left:1292px;top:797px;width:87px;height:41px;background:#fde19c">∘</div><div class="c" dir="ltr" style="left:1235px;top:797px;width:57px;height:41px;background:#fde19c">۳,۴۳۲</div><div class="c" dir="ltr" style="left:1180px;top:797px;width:55px;height:41px;background:#fde19c">۳,۴۳۲</div><div class="c" dir="ltr" style="left:1095px;top:797px;width:85px;height:41px;background:#fde19c"></div><div class="c" dir="ltr" style="left:993px;top:797px;width:102px;height:41px;background:#fde19c">۱,۶۲۴,∘۸۳</div><div class="c" dir="ltr" style="left:941px;top:797px;width:52px;height:41px;background:#fde19c">۴۷</div><div class="c" dir="ltr" style="left:887px;top:797px;width:54px;height:41px;background:#fde19c">۴۷</div><div class="c" dir="ltr" style="left:803px;top:797px;width:84px;height:41px;background:#fde19c"></div><div class="c" dir="ltr" style="left:704px;top:797px;width:99px;height:41px;background:#fde19c">۲۵,۱۸۸</div><div class="c" dir="ltr" style="left:649px;top:797px;width:55px;height:41px;background:#fde19c">۳,۴۷۹</div><div class="c" dir="ltr" style="left:594px;top:797px;width:55px;height:41px;background:#fde19c">۳,۴۷۹</div><div class="c" dir="ltr" style="left:510px;top:797px;width:84px;height:41px;background:#fde19c"></div><div class="c" dir="ltr" style="left:410px;top:797px;width:100px;height:41px;background:#fde19c">۱,۶۴۹,۲۷۱</div><div class="c" dir="ltr" style="left:356px;top:797px;width:54px;height:41px;background:#fde19c">۷,۶۸۷</div><div class="c" dir="ltr" style="left:300px;top:797px;width:56px;height:41px;background:#fde19c">۷,۶۸۷</div><div class="c" dir="ltr" style="left:216px;top:797px;width:84px;height:41px;background:#fde19c"></div><div class="c" dir="ltr" style="left:115px;top:797px;width:101px;height:41px;background:#fde19c">۲,۷۱∘,۶۹۷</div><div class="st" style="left:35px;top:797px;width:80px;height:41px;background:#fde19c"></div><div class="nm sec" style="left:1800px;top:838px;width:84px;height:41px;background:#d3d3d3"><span class="sx">درآمد ارائه<br>خدمات:</span></div><div class="c" dir="ltr" style="left:1773px;top:838px;width:27px;height:41px;background:#d3d3d3"></div><div class="c" dir="ltr" style="left:1717px;top:838px;width:56px;height:41px;background:#d3d3d3"></div><div class="c" dir="ltr" style="left:1661px;top:838px;width:56px;height:41px;background:#d3d3d3"></div><div class="c" dir="ltr" style="left:1577px;top:838px;width:84px;height:41px;background:#d3d3d3"></div><div class="c" dir="ltr" style="left:1475px;top:838px;width:102px;height:41px;background:#d3d3d3"></div><div class="c" dir="ltr" style="left:1429px;top:838px;width:46px;height:41px;background:#d3d3d3"></div><div class="c" dir="ltr" style="left:1379px;top:838px;width:50px;height:41px;background:#d3d3d3"></div><div class="c" dir="ltr" style="left:1292px;top:838px;width:87px;height:41px;background:#d3d3d3"></div><div class="c" dir="ltr" style="left:1235px;top:838px;width:57px;height:41px;background:#d3d3d3"></div><div class="c" dir="ltr" style="left:1180px;top:838px;width:55px;height:41px;background:#d3d3d3"></div><div class="c" dir="ltr" style="left:1095px;top:838px;width:85px;height:41px;background:#d3d3d3"></div><div class="c" dir="ltr" style="left:993px;top:838px;width:102px;height:41px;background:#d3d3d3"></div><div class="c" dir="ltr" style="left:941px;top:838px;width:52px;height:41px;background:#d3d3d3"></div><div class="c" dir="ltr" style="left:887px;top:838px;width:54px;height:41px;background:#d3d3d3"></div><div class="c" dir="ltr" style="left:803px;top:838px;width:84px;height:41px;background:#d3d3d3"></div><div class="c" dir="ltr" style="left:704px;top:838px;width:99px;height:41px;background:#d3d3d3"></div><div class="c" dir="ltr" style="left:649px;top:838px;width:55px;height:41px;background:#d3d3d3"></div><div class="c" dir="ltr" style="left:594px;top:838px;width:55px;height:41px;background:#d3d3d3"></div><div class="c" dir="ltr" style="left:510px;top:838px;width:84px;height:41px;background:#d3d3d3"></div><div class="c" dir="ltr" style="left:410px;top:838px;width:100px;height:41px;background:#d3d3d3"></div><div class="c" dir="ltr" style="left:356px;top:838px;width:54px;height:41px;background:#d3d3d3"></div><div class="c" dir="ltr" style="left:300px;top:838px;width:56px;height:41px;background:#d3d3d3"></div><div class="c" dir="ltr" style="left:216px;top:838px;width:84px;height:41px;background:#d3d3d3"></div><div class="c" dir="ltr" style="left:115px;top:838px;width:101px;height:41px;background:#d3d3d3"></div><div class="c" dir="ltr" style="left:35px;top:838px;width:80px;height:41px;background:#d3d3d3"></div><div class="nm" style="left:1800px;top:879px;width:84px;height:41px;background:#eeeeee">خدمات اسید<br>شويي</div><div class="un" style="left:1773px;top:879px;width:27px;height:41px;background:#eeeeee">تن</div><div class="c" dir="ltr" style="left:1717px;top:879px;width:56px;height:41px;background:#eeeeee">۱۷,۱∘۳</div><div class="c" dir="ltr" style="left:1661px;top:879px;width:56px;height:41px;background:#eeeeee">∘</div><div class="c" dir="ltr" style="left:1577px;top:879px;width:84px;height:41px;background:#fde19c">∘</div><div class="c" dir="ltr" style="left:1475px;top:879px;width:102px;height:41px;background:#eeeeee">∘</div><div class="c" dir="ltr" style="left:1429px;top:879px;width:46px;height:41px;background:#eeeeee">∘</div><div class="c" dir="ltr" style="left:1379px;top:879px;width:50px;height:41px;background:#eeeeee">∘</div><div class="c" dir="ltr" style="left:1292px;top:879px;width:87px;height:41px;background:#eeeeee">∘</div><div class="c" dir="ltr" style="left:1235px;top:879px;width:57px;height:41px;background:#fde19c">۱۷,۱∘۳</div><div class="c" dir="ltr" style="left:1180px;top:879px;width:55px;height:41px;background:#fde19c">∘</div><div class="c" dir="ltr" style="left:1095px;top:879px;width:85px;height:41px;background:#fde19c">∘</div><div class="c" dir="ltr" style="left:993px;top:879px;width:102px;height:41px;background:#fde19c">∘</div><div class="c" dir="ltr" style="left:941px;top:879px;width:52px;height:41px;background:#eeeeee">۶۲۸</div><div class="c" dir="ltr" style="left:887px;top:879px;width:54px;height:41px;background:#eeeeee">∘</div><div class="c" dir="ltr" style="left:803px;top:879px;width:84px;height:41px;background:#fde19c">∘</div><div class="c" dir="ltr" style="left:704px;top:879px;width:99px;height:41px;background:#eeeeee">∘</div><div class="c" dir="ltr" style="left:649px;top:879px;width:55px;height:41px;background:#fde19c">۱۷,۷۳۱</div><div class="c" dir="ltr" style="left:594px;top:879px;width:55px;height:41px;background:#fde19c">∘</div><div class="c" dir="ltr" style="left:510px;top:879px;width:84px;height:41px;background:#fde19c">∘</div><div class="c" dir="ltr" style="left:410px;top:879px;width:100px;height:41px;background:#fde19c">∘</div><div class="c" dir="ltr" style="left:356px;top:879px;width:54px;height:41px;background:#eeeeee">۲۶,۷۹∘</div><div class="c" dir="ltr" style="left:300px;top:879px;width:56px;height:41px;background:#eeeeee">۳,۵۹۴</div><div class="c" dir="ltr" style="left:216px;top:879px;width:84px;height:41px;background:#fde19c">۱۵,∘۱۶,۶۹۴</div><div class="c" dir="ltr" style="left:115px;top:879px;width:101px;height:41px;background:#eeeeee">۵۳,۹۷∘</div><div class="st" style="left:35px;top:879px;width:80px;height:41px;background:#eeeeee">تولید</div><div class="nm" style="left:1800px;top:920px;width:84px;height:42px;background:#d1e3f4">خدمات نورد<br>سرد</div><div class="un" style="left:1773px;top:920px;width:27px;height:42px;background:#d1e3f4">تن</div><div class="c" dir="ltr" style="left:1717px;top:920px;width:56px;height:42px;background:#d1e3f4">۱۶,۹∘۳</div><div class="c" dir="ltr" style="left:1661px;top:920px;width:56px;height:42px;background:#d1e3f4">۱۶,۵۸∘</div><div class="c" dir="ltr" style="left:1577px;top:920px;width:84px;height:42px;background:#fde19c">۴∘,۸∘۹,۲۲۸</div><div class="c" dir="ltr" style="left:1475px;top:920px;width:102px;height:42px;background:#d1e3f4">۶۷۶,۶۱۷</div><div class="c red" dir="ltr" style="left:1429px;top:920px;width:46px;height:42px;background:#d1e3f4">(۷)</div><div class="c" dir="ltr" style="left:1379px;top:920px;width:50px;height:42px;background:#d1e3f4">∘</div><div class="c" dir="ltr" style="left:1292px;top:920px;width:87px;height:42px;background:#d1e3f4">∘</div><div class="c" dir="ltr" style="left:1235px;top:920px;width:57px;height:42px;background:#fde19c">۱۶,۸۹۶</div><div class="c" dir="ltr" style="left:1180px;top:920px;width:55px;height:42px;background:#fde19c">۱۶,۵۸∘</div><div class="c" dir="ltr" style="left:1095px;top:920px;width:85px;height:42px;background:#fde19c">۴∘,۸∘۹,۲۲۸</div><div class="c" dir="ltr" style="left:993px;top:920px;width:102px;height:42px;background:#fde19c">۶۷۶,۶۱۷</div><div class="c" dir="ltr" style="left:941px;top:920px;width:52px;height:42px;background:#d1e3f4">۶۱۹</div><div class="c" dir="ltr" style="left:887px;top:920px;width:54px;height:42px;background:#d1e3f4">۷۷۸</div><div class="c" dir="ltr" style="left:803px;top:920px;width:84px;height:42px;background:#fde19c">۷۶,۴۷۵,۵۷۸</div><div class="c" dir="ltr" style="left:704px;top:920px;width:99px;height:42px;background:#d1e3f4">۵۹,۴۹۸</div><div class="c" dir="ltr" style="left:649px;top:920px;width:55px;height:42px;background:#fde19c">۱۷,۵۱۵</div><div class="c" dir="ltr" style="left:594px;top:920px;width:55px;height:42px;background:#fde19c">۱۷,۳۵۸</div><div class="c" dir="ltr" style="left:510px;top:920px;width:84px;height:42px;background:#fde19c">۴۲,۴∘۷,۸۲۳</div><div class="c" dir="ltr" style="left:410px;top:920px;width:100px;height:42px;background:#fde19c">۷۳۶,۱۱۵</div><div class="c" dir="ltr" style="left:356px;top:920px;width:54px;height:42px;background:#d1e3f4">۲۳,۲۲۹</div><div class="c" dir="ltr" style="left:300px;top:920px;width:56px;height:42px;background:#d1e3f4">۲۲,۲۱۸</div><div class="c" dir="ltr" style="left:216px;top:920px;width:84px;height:42px;background:#fde19c">۴۳,۵۵۷,۹۷۱</div><div class="c" dir="ltr" style="left:115px;top:920px;width:101px;height:42px;background:#d1e3f4">۹۶۷,۷۷۱</div><div class="st" style="left:35px;top:920px;width:80px;height:42px;background:#d1e3f4">تولید</div><div class="nm" style="left:1800px;top:962px;width:84px;height:24px;background:#eeeeee">خدمات آنیلینگ</div><div class="un" style="left:1773px;top:962px;width:27px;height:24px;background:#eeeeee">تن</div><div class="c" dir="ltr" style="left:1717px;top:962px;width:56px;height:24px;background:#eeeeee">∘</div><div class="c" dir="ltr" style="left:1661px;top:962px;width:56px;height:24px;background:#eeeeee">∘</div><div class="c" dir="ltr" style="left:1577px;top:962px;width:84px;height:24px;background:#fde19c">∘</div><div class="c" dir="ltr" style="left:1475px;top:962px;width:102px;height:24px;background:#eeeeee">∘</div><div class="c" dir="ltr" style="left:1429px;top:962px;width:46px;height:24px;background:#eeeeee">∘</div><div class="c" dir="ltr" style="left:1379px;top:962px;width:50px;height:24px;background:#eeeeee">∘</div><div class="c" dir="ltr" style="left:1292px;top:962px;width:87px;height:24px;background:#eeeeee">∘</div><div class="c" dir="ltr" style="left:1235px;top:962px;width:57px;height:24px;background:#fde19c">∘</div><div class="c" dir="ltr" style="left:1180px;top:962px;width:55px;height:24px;background:#fde19c">∘</div><div class="c" dir="ltr" style="left:1095px;top:962px;width:85px;height:24px;background:#fde19c">∘</div><div class="c" dir="ltr" style="left:993px;top:962px;width:102px;height:24px;background:#fde19c">∘</div><div class="c" dir="ltr" style="left:941px;top:962px;width:52px;height:24px;background:#eeeeee">∘</div><div class="c" dir="ltr" style="left:887px;top:962px;width:54px;height:24px;background:#eeeeee">∘</div><div class="c" dir="ltr" style="left:803px;top:962px;width:84px;height:24px;background:#fde19c">∘</div><div class="c" dir="ltr" style="left:704px;top:962px;width:99px;height:24px;background:#eeeeee">∘</div><div class="c" dir="ltr" style="left:649px;top:962px;width:55px;height:24px;background:#fde19c">∘</div><div class="c" dir="ltr" style="left:594px;top:962px;width:55px;height:24px;background:#fde19c">∘</div><div class="c" dir="ltr" style="left:510px;top:962px;width:84px;height:24px;background:#fde19c">∘</div><div class="c" dir="ltr" style="left:410px;top:962px;width:100px;height:24px;background:#fde19c">∘</div><div class="c" dir="ltr" style="left:356px;top:962px;width:54px;height:24px;background:#eeeeee">∘</div><div class="c" dir="ltr" style="left:300px;top:962px;width:56px;height:24px;background:#eeeeee">∘</div><div class="c" dir="ltr" style="left:216px;top:962px;width:84px;height:24px;background:#fde19c">∘</div><div class="c" dir="ltr" style="left:115px;top:962px;width:101px;height:24px;background:#eeeeee">∘</div><div class="st" style="left:35px;top:962px;width:80px;height:24px;background:#eeeeee">تولید</div><div class="nm" style="left:1800px;top:986px;width:84px;height:24px;background:#d1e3f4"><span style="font-size:11px">خدمات گالوانیزه</span></div><div class="un" style="left:1773px;top:986px;width:27px;height:24px;background:#d1e3f4">تن</div><div class="c" dir="ltr" style="left:1717px;top:986px;width:56px;height:24px;background:#d1e3f4">∘</div><div class="c" dir="ltr" style="left:1661px;top:986px;width:56px;height:24px;background:#d1e3f4">۲∘۲</div><div class="c" dir="ltr" style="left:1577px;top:986px;width:84px;height:24px;background:#fde19c">۸۵,۷۲۷,۷۲۳</div><div class="c" dir="ltr" style="left:1475px;top:986px;width:102px;height:24px;background:#d1e3f4">۱۷,۳۱۷</div><div class="c" dir="ltr" style="left:1429px;top:986px;width:46px;height:24px;background:#d1e3f4">∘</div><div class="c" dir="ltr" style="left:1379px;top:986px;width:50px;height:24px;background:#d1e3f4">∘</div><div class="c" dir="ltr" style="left:1292px;top:986px;width:87px;height:24px;background:#d1e3f4">∘</div><div class="c" dir="ltr" style="left:1235px;top:986px;width:57px;height:24px;background:#fde19c">∘</div><div class="c" dir="ltr" style="left:1180px;top:986px;width:55px;height:24px;background:#fde19c">۲∘۲</div><div class="c" dir="ltr" style="left:1095px;top:986px;width:85px;height:24px;background:#fde19c">۸۵,۷۲۷,۷۲۳</div><div class="c" dir="ltr" style="left:993px;top:986px;width:102px;height:24px;background:#fde19c">۱۷,۳۱۷</div><div class="c" dir="ltr" style="left:941px;top:986px;width:52px;height:24px;background:#d1e3f4">∘</div><div class="c" dir="ltr" style="left:887px;top:986px;width:54px;height:24px;background:#d1e3f4">∘</div><div class="c" dir="ltr" style="left:803px;top:986px;width:84px;height:24px;background:#fde19c">∘</div><div class="c" dir="ltr" style="left:704px;top:986px;width:99px;height:24px;background:#d1e3f4">∘</div><div class="c" dir="ltr" style="left:649px;top:986px;width:55px;height:24px;background:#fde19c">∘</div><div class="c" dir="ltr" style="left:594px;top:986px;width:55px;height:24px;background:#fde19c">۲∘۲</div><div class="c" dir="ltr" style="left:510px;top:986px;width:84px;height:24px;background:#fde19c">۸۵,۷۲۷,۷۲۳</div><div class="c" dir="ltr" style="left:410px;top:986px;width:100px;height:24px;background:#fde19c">۱۷,۳۱۷</div><div class="c" dir="ltr" style="left:356px;top:986px;width:54px;height:24px;background:#d1e3f4">۵۳</div><div class="c" dir="ltr" style="left:300px;top:986px;width:56px;height:24px;background:#d1e3f4">۵۳</div><div class="c" dir="ltr" style="left:216px;top:986px;width:84px;height:24px;background:#fde19c">۵۹,۷۷۳,۵۸۵</div><div class="c" dir="ltr" style="left:115px;top:986px;width:101px;height:24px;background:#d1e3f4">۳,۱۶۸</div><div class="st" style="left:35px;top:986px;width:80px;height:24px;background:#d1e3f4">تولید</div><div class="nm" style="left:1800px;top:1010px;width:84px;height:41px;background:#fde19c">جمع درآمد ارائه<br>خدمات</div><div class="un" style="left:1773px;top:1010px;width:27px;height:41px;background:#fde19c"></div><div class="c" dir="ltr" style="left:1717px;top:1010px;width:56px;height:41px;background:#fde19c">۳۴,∘∘۶</div><div class="c" dir="ltr" style="left:1661px;top:1010px;width:56px;height:41px;background:#fde19c">۱۶,۷۸۲</div><div class="c" dir="ltr" style="left:1577px;top:1010px;width:84px;height:41px;background:#fde19c"></div><div class="c" dir="ltr" style="left:1475px;top:1010px;width:102px;height:41px;background:#fde19c">۶۹۳,۹۳۴</div><div class="c red" dir="ltr" style="left:1429px;top:1010px;width:46px;height:41px;background:#fde19c">(۷)</div><div class="c" dir="ltr" style="left:1379px;top:1010px;width:50px;height:41px;background:#fde19c">∘</div><div class="c" dir="ltr" style="left:1292px;top:1010px;width:87px;height:41px;background:#fde19c">∘</div><div class="c" dir="ltr" style="left:1235px;top:1010px;width:57px;height:41px;background:#fde19c">۳۳,۹۹۹</div><div class="c" dir="ltr" style="left:1180px;top:1010px;width:55px;height:41px;background:#fde19c">۱۶,۷۸۲</div><div class="c" dir="ltr" style="left:1095px;top:1010px;width:85px;height:41px;background:#fde19c"></div><div class="c" dir="ltr" style="left:993px;top:1010px;width:102px;height:41px;background:#fde19c">۶۹۳,۹۳۴</div><div class="c" dir="ltr" style="left:941px;top:1010px;width:52px;height:41px;background:#fde19c">۱,۲۴۷</div><div class="c" dir="ltr" style="left:887px;top:1010px;width:54px;height:41px;background:#fde19c">۷۷۸</div><div class="c" dir="ltr" style="left:803px;top:1010px;width:84px;height:41px;background:#fde19c"></div><div class="c" dir="ltr" style="left:704px;top:1010px;width:99px;height:41px;background:#fde19c">۵۹,۴۹۸</div><div class="c" dir="ltr" style="left:649px;top:1010px;width:55px;height:41px;background:#fde19c">۳۵,۲۴۶</div><div class="c" dir="ltr" style="left:594px;top:1010px;width:55px;height:41px;background:#fde19c">۱۷,۵۶∘</div><div class="c" dir="ltr" style="left:510px;top:1010px;width:84px;height:41px;background:#fde19c"></div><div class="c" dir="ltr" style="left:410px;top:1010px;width:100px;height:41px;background:#fde19c">۷۵۳,۴۳۲</div><div class="c" dir="ltr" style="left:356px;top:1010px;width:54px;height:41px;background:#fde19c">۵∘,∘۷۲</div><div class="c" dir="ltr" style="left:300px;top:1010px;width:56px;height:41px;background:#fde19c">۲۵,۸۶۵</div><div class="c" dir="ltr" style="left:216px;top:1010px;width:84px;height:41px;background:#fde19c"></div><div class="c" dir="ltr" style="left:115px;top:1010px;width:101px;height:41px;background:#fde19c">۱,∘۲۴,۹∘۹</div><div class="st" style="left:35px;top:1010px;width:80px;height:41px;background:#fde19c"></div><div class="nm sec" style="left:1800px;top:1051px;width:84px;height:41px;background:#d3d3d3"><span class="sx">برگشت از<br>فروش:</span></div><div class="c" dir="ltr" style="left:1773px;top:1051px;width:27px;height:41px;background:#d3d3d3"></div><div class="c" dir="ltr" style="left:1717px;top:1051px;width:56px;height:41px;background:#d3d3d3"></div><div class="c" dir="ltr" style="left:1661px;top:1051px;width:56px;height:41px;background:#d3d3d3"></div><div class="c" dir="ltr" style="left:1577px;top:1051px;width:84px;height:41px;background:#d3d3d3"></div><div class="c" dir="ltr" style="left:1475px;top:1051px;width:102px;height:41px;background:#d3d3d3"></div><div class="c" dir="ltr" style="left:1429px;top:1051px;width:46px;height:41px;background:#d3d3d3"></div><div class="c" dir="ltr" style="left:1379px;top:1051px;width:50px;height:41px;background:#d3d3d3"></div><div class="c" dir="ltr" style="left:1292px;top:1051px;width:87px;height:41px;background:#d3d3d3"></div><div class="c" dir="ltr" style="left:1235px;top:1051px;width:57px;height:41px;background:#d3d3d3"></div><div class="c" dir="ltr" style="left:1180px;top:1051px;width:55px;height:41px;background:#d3d3d3"></div><div class="c" dir="ltr" style="left:1095px;top:1051px;width:85px;height:41px;background:#d3d3d3"></div><div class="c" dir="ltr" style="left:993px;top:1051px;width:102px;height:41px;background:#d3d3d3"></div><div class="c" dir="ltr" style="left:941px;top:1051px;width:52px;height:41px;background:#d3d3d3"></div><div class="c" dir="ltr" style="left:887px;top:1051px;width:54px;height:41px;background:#d3d3d3"></div><div class="c" dir="ltr" style="left:803px;top:1051px;width:84px;height:41px;background:#d3d3d3"></div><div class="c" dir="ltr" style="left:704px;top:1051px;width:99px;height:41px;background:#d3d3d3"></div><div class="c" dir="ltr" style="left:649px;top:1051px;width:55px;height:41px;background:#d3d3d3"></div><div class="c" dir="ltr" style="left:594px;top:1051px;width:55px;height:41px;background:#d3d3d3"></div><div class="c" dir="ltr" style="left:510px;top:1051px;width:84px;height:41px;background:#d3d3d3"></div><div class="c" dir="ltr" style="left:410px;top:1051px;width:100px;height:41px;background:#d3d3d3"></div><div class="c" dir="ltr" style="left:356px;top:1051px;width:54px;height:41px;background:#d3d3d3"></div><div class="c" dir="ltr" style="left:300px;top:1051px;width:56px;height:41px;background:#d3d3d3"></div><div class="c" dir="ltr" style="left:216px;top:1051px;width:84px;height:41px;background:#d3d3d3"></div><div class="c" dir="ltr" style="left:115px;top:1051px;width:101px;height:41px;background:#d3d3d3"></div><div class="c" dir="ltr" style="left:35px;top:1051px;width:80px;height:41px;background:#d3d3d3"></div>
<div class="vl" style="left:35px;top:435px;height:657px"></div><div class="vl" style="left:115px;top:435px;height:657px"></div><div class="vl" style="left:216px;top:435px;height:657px"></div><div class="vl" style="left:300px;top:435px;height:657px"></div><div class="vl" style="left:356px;top:435px;height:657px"></div><div class="vl" style="left:410px;top:435px;height:657px"></div><div class="vl" style="left:510px;top:435px;height:657px"></div><div class="vl" style="left:594px;top:435px;height:657px"></div><div class="vl" style="left:649px;top:435px;height:657px"></div><div class="vl" style="left:704px;top:435px;height:657px"></div><div class="vl" style="left:803px;top:435px;height:657px"></div><div class="vl" style="left:887px;top:435px;height:657px"></div><div class="vl" style="left:941px;top:435px;height:657px"></div><div class="vl" style="left:993px;top:435px;height:657px"></div><div class="vl" style="left:1095px;top:435px;height:657px"></div><div class="vl" style="left:1180px;top:435px;height:657px"></div><div class="vl" style="left:1235px;top:435px;height:657px"></div><div class="vl" style="left:1292px;top:435px;height:657px"></div><div class="vl" style="left:1379px;top:435px;height:657px"></div><div class="vl" style="left:1429px;top:435px;height:657px"></div><div class="vl" style="left:1475px;top:435px;height:657px"></div><div class="vl" style="left:1577px;top:435px;height:657px"></div><div class="vl" style="left:1661px;top:435px;height:657px"></div><div class="vl" style="left:1717px;top:435px;height:657px"></div><div class="vl" style="left:1773px;top:435px;height:657px"></div><div class="vl" style="left:1800px;top:435px;height:657px"></div><div class="vl" style="left:1884px;top:435px;height:657px"></div><div class="hl" style="left:35px;top:435px;width:1850px"></div><div class="hl" style="left:35px;top:459px;width:1850px"></div><div class="hl" style="left:35px;top:501px;width:1850px"></div><div class="hl" style="left:35px;top:525px;width:1850px"></div><div class="hl" style="left:35px;top:566px;width:1850px"></div><div class="hl" style="left:35px;top:607px;width:1850px"></div><div class="hl" style="left:35px;top:649px;width:1850px"></div><div class="hl" style="left:35px;top:690px;width:1850px"></div><div class="hl" style="left:35px;top:714px;width:1850px"></div><div class="hl" style="left:35px;top:755px;width:1850px"></div><div class="hl" style="left:35px;top:797px;width:1850px"></div><div class="hl" style="left:35px;top:838px;width:1850px"></div><div class="hl" style="left:35px;top:879px;width:1850px"></div><div class="hl" style="left:35px;top:920px;width:1850px"></div><div class="hl" style="left:35px;top:962px;width:1850px"></div><div class="hl" style="left:35px;top:986px;width:1850px"></div><div class="hl" style="left:35px;top:1010px;width:1850px"></div><div class="hl" style="left:35px;top:1051px;width:1850px"></div><div class="hl" style="left:35px;top:1092px;width:1850px"></div>
</div>
<div class="wm">@Codal360.ir</div>
</body></html>
